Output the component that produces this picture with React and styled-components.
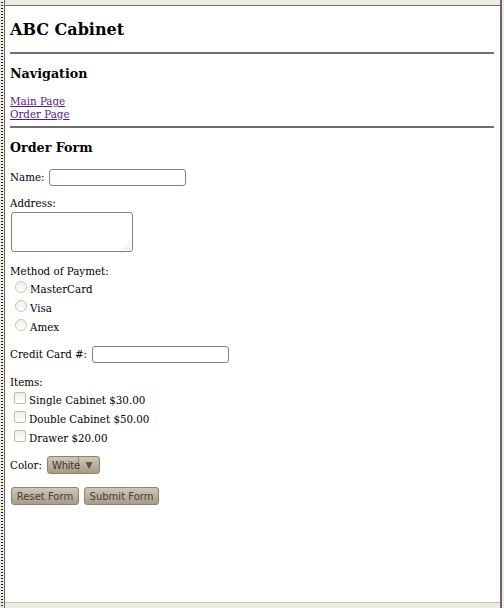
import React from 'react'
import styled, { createGlobalStyle } from 'styled-components'

const GlobalStyle = createGlobalStyle`
	html, body {
		margin: 0;
		padding: 0;
		background: #edeae3;
	}
	* {
		box-sizing: border-box;
	}
`

const Desktop = styled.div`
	display: flex;
	width: 504px;
	height: 608px;
	overflow: hidden;
	background: #edeae3;
`

const LeftStrip = styled.div`
	width: 4px;
	flex: none;
	background-color: #edeae3;
	background-image: repeating-linear-gradient(
		to bottom,
		transparent 0,
		transparent 2px,
		#222 2px,
		#222 3px
	);
	background-size: 2px 100%;
	background-position: 1px 0;
	background-repeat: no-repeat;
`

const Window = styled.div`
	display: flex;
	flex-direction: column;
	width: 498px;
	flex: none;
	border-left: 1px solid #6b665c;
	border-right: 2px solid #6b665c;
`

const TopBand = styled.div`
	height: 6px;
	flex: none;
	background: #edeae3;
	border-bottom: 1px solid #777165;
`

const BottomBand = styled.div`
	height: 6px;
	flex: none;
	background: #edeae3;
	border-top: 1px solid #c8c3b8;
`

const Page = styled.div`
	flex: 1;
	background: #fff;
	padding: 0 5px 0 5px;
	font-family: 'DejaVu Serif', serif;
	font-size: 10.3px;
	color: #000;
`

const Title = styled.h1`
	font-size: 16px;
	line-height: 21px;
	margin: 13px 0 12px;
`

const SubTitle = styled.h3`
	font-size: 12.7px;
	line-height: 15px;
	margin: ${(p) => p.$margin || '12px 0 13px'};
`

const Rule = styled.hr`
	border: none;
	height: 2px;
	background: #6e6e6e;
	margin: 0 0 0 0;
	width: 484px;
`

const NavLink = styled.a`
	display: block;
	color: #551a8b;
	text-decoration: underline;
	line-height: 13px;
`

const NavBlock = styled.div`
	margin-bottom: 5px;
	padding-top: 1px;
`

const Field = styled.div`
	display: flex;
	align-items: center;
	gap: 5px;
	margin-bottom: ${(p) => p.$mb || '10px'};
`

const FieldStack = styled.div`
	margin-bottom: ${(p) => p.$mb || '10px'};
`

const Label = styled.span`
	display: block;
	line-height: 15px;
`

const TextInput = styled.input`
	width: ${(p) => p.$w}px;
	height: 17px;
	border: 1px solid #8c8272;
	border-radius: 3px;
	background: #fff;
	padding: 0 3px;
	font: inherit;
`

const AreaWrap = styled.div`
	position: relative;
	width: 122px;
	height: 40px;
	margin: 1px 0 0 1px;
`

const Area = styled.textarea`
	width: 122px;
	height: 40px;
	border: 1px solid #8c8272;
	border-radius: 3px;
	resize: none;
	display: block;
	font: inherit;
`

const Grip = styled.div`
	position: absolute;
	right: 3px;
	bottom: 3px;
	width: 8px;
	height: 8px;
	background-image: radial-gradient(circle, #c8c3ba 0.8px, transparent 1px);
	background-size: 3px 3px;
	clip-path: polygon(100% 0, 100% 100%, 0 100%);
`

const OptionRow = styled.label`
	display: flex;
	align-items: center;
	gap: 3px;
	padding-left: ${(p) => p.$indent || 5}px;
	height: 19px;
`

const Radio = styled.span`
	width: 12px;
	height: 12px;
	border-radius: 50%;
	border: 1px solid #cbc4b6;
	background: linear-gradient(to bottom, #f2efe9, #fff);
	flex: none;
	margin-top: -4px;
`

const Check = styled.span`
	width: 12px;
	height: 12px;
	border-radius: 2px;
	border: 1px solid #c3bcae;
	background: linear-gradient(to bottom, #f2efe9, #fff);
	flex: none;
	margin-top: -4px;
`

const Select = styled.div`
	display: flex;
	align-items: stretch;
	width: 53px;
	height: 18px;
	border: 1px solid #8d8170;
	border-radius: 3px;
	background: linear-gradient(to bottom, #cfc6b6, #a99c87);
	font-family: 'DejaVu Sans', sans-serif;
	font-size: 10px;
	color: #3e342a;
	overflow: hidden;
`

const SelectValue = styled.span`
	display: flex;
	align-items: center;
	padding-left: 4px;
	width: 31px;
	border-right: 1px solid #938672;
	letter-spacing: -0.2px;
`

const SelectArrow = styled.span`
	flex: 1;
	display: flex;
	align-items: center;
	justify-content: center;
	font-size: 9px;
	color: #5a4e40;
`

const Buttons = styled.div`
	display: flex;
	gap: 5px;
	padding-left: 1px;
`

const Button = styled.button`
	width: ${(p) => p.$w}px;
	height: 18px;
	padding: 0;
	border: 1px solid #8e816d;
	border-radius: 3px;
	background: linear-gradient(to bottom, #cfc6b6, #a99c87);
	font-family: 'DejaVu Sans', sans-serif;
	font-size: 10px;
	color: #4a3f33;
`

export default function App() {
	return (
		<Desktop>
			<GlobalStyle />
			<LeftStrip />
			<Window>
				<TopBand />
				<Page>
					<Title>ABC Cabinet</Title>
					<Rule />
					<SubTitle>Navigation</SubTitle>
					<NavBlock>
						<NavLink href='#main'>Main Page</NavLink>
						<NavLink href='#order'>Order Page</NavLink>
					</NavBlock>
					<Rule />
					<SubTitle $margin='12px 0 14px'>Order Form</SubTitle>
					<Field $mb='10px'>
						<Label>Name:</Label>
						<TextInput $w={137} />
					</Field>
					<FieldStack $mb='12px'>
						<Label>Address:</Label>
						<AreaWrap>
							<Area />
							<Grip />
						</AreaWrap>
					</FieldStack>
					<FieldStack $mb='10px'>
						<Label>Method of Paymet:</Label>
						<OptionRow>
							<Radio />
							MasterCard
						</OptionRow>
						<OptionRow>
							<Radio />
							Visa
						</OptionRow>
						<OptionRow>
							<Radio />
							Amex
						</OptionRow>
					</FieldStack>
					<Field $mb='12px'>
						<Label>Credit Card #:</Label>
						<TextInput $w={137} />
					</Field>
					<FieldStack $mb='9px'>
						<Label>Items:</Label>
						<OptionRow $indent={4}>
							<Check />
							Single Cabinet $30.00
						</OptionRow>
						<OptionRow $indent={4}>
							<Check />
							Double Cabinet $50.00
						</OptionRow>
						<OptionRow $indent={4}>
							<Check />
							Drawer $20.00
						</OptionRow>
					</FieldStack>
					<Field $mb='13px'>
						<Label>Color:</Label>
						<Select>
							<SelectValue>White</SelectValue>
							<SelectArrow>▼</SelectArrow>
						</Select>
					</Field>
					<Buttons>
						<Button $w={68}>Reset Form</Button>
						<Button $w={75}>Submit Form</Button>
					</Buttons>
				</Page>
				<BottomBand />
			</Window>
		</Desktop>
	)
}
